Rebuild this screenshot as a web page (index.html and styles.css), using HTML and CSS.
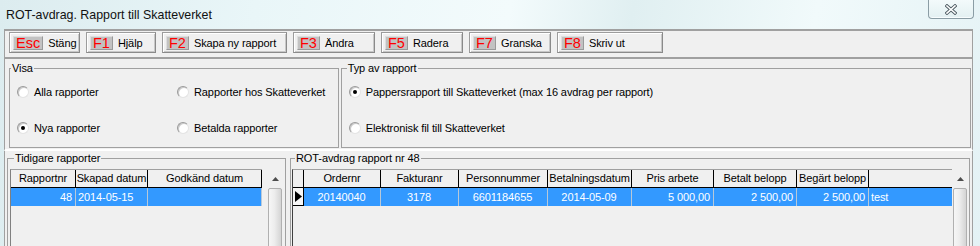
FILE: index.html
```html
<!DOCTYPE html>
<html lang="sv">
<head>
<meta charset="utf-8">
<title>ROT-avdrag. Rapport till Skatteverket</title>
<link rel="stylesheet" href="styles.css">
</head>
<body>
<div class="window">
  <div class="titlebar">
    <span class="title">ROT-avdrag. Rapport till Skatteverket</span>
    <button class="close" aria-label="Stäng">
      <svg width="12" height="11" viewBox="0 0 12 11">
        <path d="M2 2 L10 9 M10 2 L2 9" stroke="#4b5960" stroke-width="3.4" stroke-linecap="square" fill="none"/>
        <path d="M2 2 L10 9 M10 2 L2 9" stroke="#fff" stroke-width="1.6" stroke-linecap="square" fill="none"/>
      </svg>
    </button>
  </div>
  <div class="client">
    <div class="toolbar">
      <div class="tbtn w-esc"><span class="key">Esc</span><span class="lbl">Stäng</span></div>
      <div class="tbtn w-f1"><span class="key">F1</span><span class="lbl">Hjälp</span></div>
      <div class="tbtn w-f2"><span class="key">F2</span><span class="lbl">Skapa ny rapport</span></div>
      <div class="tbtn w-f3"><span class="key">F3</span><span class="lbl">Ändra</span></div>
      <div class="tbtn w-f5"><span class="key">F5</span><span class="lbl">Radera</span></div>
      <div class="tbtn w-f7"><span class="key">F7</span><span class="lbl">Granska</span></div>
      <div class="tbtn w-f8"><span class="key">F8</span><span class="lbl">Skriv ut</span></div>
    </div>
    <div class="options">
      <fieldset class="group visa">
        <legend>Visa</legend>
        <div class="radios two">
          <div class="radio"><span class="dot"></span>Alla rapporter</div>
          <div class="radio"><span class="dot"></span>Rapporter hos Skatteverket</div>
          <div class="radio"><span class="dot on"></span>Nya rapporter</div>
          <div class="radio"><span class="dot"></span>Betalda rapporter</div>
        </div>
      </fieldset>
      <fieldset class="group typ">
        <legend>Typ av rapport</legend>
        <div class="radios">
          <div class="radio"><span class="dot on"></span>Pappersrapport till Skatteverket (max 16 avdrag per rapport)</div>
          <div class="radio"><span class="dot"></span>Elektronisk fil till Skatteverket</div>
        </div>
      </fieldset>
    </div>
    <div class="lists">
      <fieldset class="group prev">
        <legend>Tidigare rapporter</legend>
        <div class="gridwrap">
          <div class="table t-prev">
            <div class="th">Rapportnr</div>
            <div class="th">Skapad datum</div>
            <div class="th">Godkänd datum</div>
            <div class="td r">48</div>
            <div class="td">2014-05-15</div>
            <div class="td"></div>
          </div>
          <div class="sb sb-prev">
            <div class="sb-up"><svg width="7" height="4" viewBox="0 0 7 4"><polygon points="3.5,0 7,4 0,4" fill="#4d4d4d"/></svg></div>
            <div class="sb-thumb"></div>
          </div>
        </div>
      </fieldset>
      <fieldset class="group rot">
        <legend>ROT-avdrag rapport nr 48</legend>
        <div class="gridwrap gw-rot">
          <div class="table t-rot">
            <div class="th ind"></div>
            <div class="th">Ordernr</div>
            <div class="th">Fakturanr</div>
            <div class="th">Personnummer</div>
            <div class="th">Betalningsdatum</div>
            <div class="th">Pris arbete</div>
            <div class="th">Betalt belopp</div>
            <div class="th">Begärt belopp</div>
            <div class="th last"></div>
            <div class="ind-cell"><svg width="7" height="11" viewBox="0 0 7 11"><polygon points="0,0 7,5.5 0,11" fill="#000"/></svg></div>
            <div class="td c">20140040</div>
            <div class="td c">3178</div>
            <div class="td c">6601184655</div>
            <div class="td c">2014-05-09</div>
            <div class="td r">5 000,00</div>
            <div class="td r">2 500,00</div>
            <div class="td r">2 500,00</div>
            <div class="td last">test</div>
          </div>
          <div class="sb sb-rot">
            <div class="sb-up"><svg width="7" height="4" viewBox="0 0 7 4"><polygon points="3.5,0 7,4 0,4" fill="#4d4d4d"/></svg></div>
            <div class="sb-thumb"></div>
          </div>
        </div>
      </fieldset>
    </div>
  </div>
</div>
</body>
</html>
```

FILE: styles.css
```css
* { box-sizing: border-box; }
html, body { margin: 0; height: 246px; overflow: hidden; }
body {
  font-family: "Liberation Sans", Arial, sans-serif;
  font-size: 11px;
  letter-spacing: -0.1px;
  color: #000;
  background: linear-gradient(100deg, #dcecef 0%, #e9f6f8 25%, #f3fbfc 50%, #e0eff1 62%, #f1fafb 80%, #e4f2f5 100%);
}
.window { display: flex; flex-direction: column; height: 246px; }

.titlebar { height: 29px; display: flex; align-items: flex-start; flex: none; }
.title { font-size: 12.4px; letter-spacing: 0; line-height: 14px; padding: 8px 0 0 6px; color: #111; }
.close {
  margin-left: auto; margin-right: 6px;
  width: 46px; height: 19px; padding: 0;
  border: 1px solid #8b9da5; border-top: none;
  border-radius: 0 0 4px 4px;
  background: linear-gradient(#f3fafb, #e3f0f2);
  box-shadow: inset 0 -1px 0 #f8fdfe;
  display: flex; align-items: center; justify-content: center;
}

.client {
  margin: 0 7px 0 4px; flex: 1; min-height: 0;
  background: #f0f0f0;
  display: flex; flex-direction: column;
}

.toolbar {
  height: 28px; flex: none;
  display: flex; gap: 6px;
  border-top: 2px solid #a0a0a0;
  border-left: 1px solid #a0a0a0;
  border-right: 1px solid #a0a0a0;
  padding: 1px 0 4px 4px;
}
.tbtn {
  height: 21px;
  display: flex; align-items: center;
  background: #f0f0f0;
  border: 1px solid #9c9c9c;
  border-right-color: #8a8a8a; border-bottom-color: #8a8a8a;
  box-shadow: inset 1px 1px 0 #fff, inset -1px -1px 0 #c8c8c8;
  padding: 1px 0 0 3px;
}
.w-esc { width: 71px; }
.w-f1 { width: 70px; }
.w-f2 { width: 125px; }
.w-f3 { width: 82px; }
.w-f5 { width: 82px; }
.w-f7 { width: 82px; }
.w-f8 { width: 106px; }
.key {
  height: 14px; line-height: 13px;
  font-size: 14.5px; letter-spacing: 0; color: #f00;
  background: #c2c2c2;
  border: 1px solid #dedede;
  border-right-color: #9a9a9a; border-bottom-color: #9a9a9a;
  padding: 0 2px;
}
.lbl { margin-left: 5px; }

.options {
  height: 94px; flex: none;
  display: flex; gap: 2px;
  border-top: 2px solid #a0a0a0;
  border-left: 1px solid #a0a0a0;
  border-right: 1px solid #a0a0a0;
  border-bottom: 2px solid #fff;
  padding: 2px 1px 1px 4px;
}

.group {
  margin: 0; padding: 0; min-width: 0;
  border: 1px solid #a0a0a0;
}
.group legend { padding: 0 1px; line-height: 14px; font-size: 11px; }
.visa { width: 330px; height: 87px; }
.visa legend { margin-left: 1px; }
.typ { width: 631px; height: 87px; }
.typ legend { margin-left: 5px; }

.radios { display: grid; row-gap: 18px; padding: 8px 0 0 7px; }
.radios.two { grid-template-columns: 160px 1fr; }
.radio { display: flex; align-items: center; height: 18px; gap: 5px; white-space: nowrap; }
.dot {
  width: 12px; height: 12px; border-radius: 50%; flex: none;
  background: radial-gradient(circle at 60% 60%, #fff 45%, #ececec 100%);
  border: 1px solid #9a9a9a;
  border-right-color: #e4e4e4; border-bottom-color: #e4e4e4;
  box-shadow: inset 1px 1px 0 #c8c8c8;
  display: flex; align-items: center; justify-content: center;
}
.dot.on::after {
  content: ""; width: 4px; height: 4px; border-radius: 50%; background: #000;
}

.lists {
  flex: 1; min-height: 0;
  display: flex; gap: 4px;
  border-left: 1px solid #a0a0a0;
  border-right: 1px solid #a0a0a0;
  padding: 0 0 0 2px;
}
.prev { width: 279px; height: 110px; }
.prev legend { margin-left: 6px; }
.rot { width: 680px; height: 110px; }
.rot legend { margin-left: 4px; }

.gridwrap { display: flex; padding: 4px 2px 0 2px; height: 92px; }
.gw-rot { padding-left: 1px; }

.table {
  display: grid; align-content: start;
  grid-template-rows: 18px 18px;
  border-left: 1px solid #808080;
  border-top: 1px solid #a0a0a0;
  background: #f0f0f0;
}
.t-prev { grid-template-columns: 65px 72px 114px; }
.t-rot { grid-template-columns: 11px 77px 78px 89px 84px 82px 83px 72px 83px; border-left-color: #404040; }

.th {
  border-right: 1px solid #000;
  border-bottom: 1px solid #000;
  text-align: center; line-height: 17px;
  white-space: nowrap; overflow: hidden;
}
.th.last { border-right: none; }
.td {
  background: #3399ff; color: #fff;
  border-right: 1px solid #b8c8d8;
  line-height: 18px; padding: 0 3px 0 2px;
  white-space: nowrap; overflow: hidden;
}
.td.last { border-right: none; }
.r { text-align: right; }
.c { text-align: center; }
.ind-cell {
  border-right: 1px solid #000;
  border-bottom: 1px solid #000;
  background: #f6f6f6;
  display: flex; align-items: center; justify-content: center;
}

.sb { width: 14px; display: flex; flex-direction: column; }
.sb-prev { margin-left: 6px; }
.sb-rot { margin-left: 1px; }
.sb-up { height: 19px; display: flex; align-items: center; justify-content: center; flex: none; }
.sb-thumb {
  flex: 1;
  border: 1px solid #b0b0b0;
  border-radius: 2px 2px 0 0;
  background: linear-gradient(90deg, #f6f6f6, #ededed 45%, #d4d4d4);
}
```
